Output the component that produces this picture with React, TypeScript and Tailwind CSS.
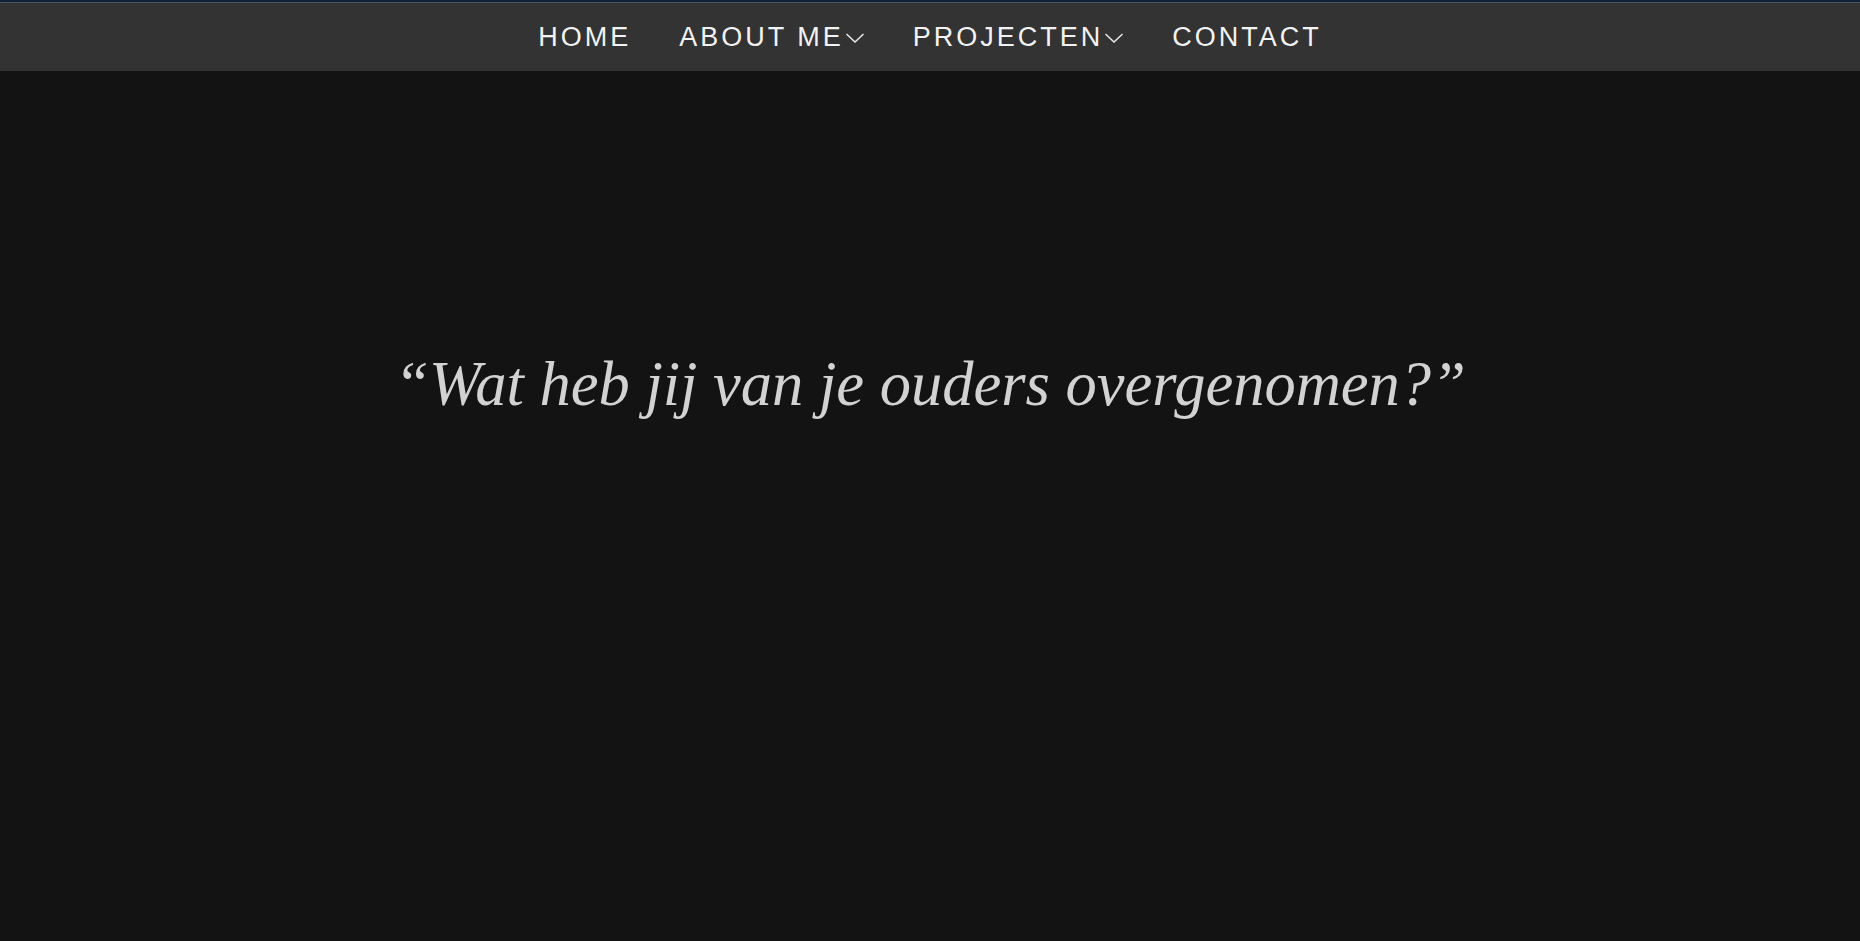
import React from "react";

const navItems = [
  { label: "Home", dropdown: false },
  { label: "About me", dropdown: true },
  { label: "Projecten", dropdown: true },
  { label: "Contact", dropdown: false },
];

function Chevron() {
  return (
    <svg width="20" height="10" viewBox="0 0 20 10" fill="none" className="ml-px mt-[2px]">
      <polyline points="1.5,1 10,9 18.5,1" stroke="#e8e8e8" strokeWidth="1.5" />
    </svg>
  );
}

export default function App() {
  return (
    <div className="min-h-[941px] bg-[#131313] font-['Liberation_Sans',Arial,sans-serif]">
      {/* Top bar */}
      <header className="border-t-2 border-[#0f2237] bg-[#333333]">
        <div className="h-px bg-[#4a5560]" />
        <nav className="flex h-[68px] items-center justify-center">
          {navItems.map(item => (
            <a
              key={item.label}
              href="#"
              className="flex items-center px-6 text-[27px] uppercase tracking-[3px] text-[#f2f2f2]"
            >
              {item.label}
              {item.dropdown && <Chevron />}
            </a>
          ))}
        </nav>
      </header>

      {/* Quote */}
      <main className="flex justify-center pt-[282px]">
        <p className="font-['Liberation_Serif','Times_New_Roman',serif] text-[62.5px] italic leading-none text-[#d2d2d2]">
          “Wat heb jij van je ouders overgenomen?”
        </p>
      </main>
    </div>
  );
}
